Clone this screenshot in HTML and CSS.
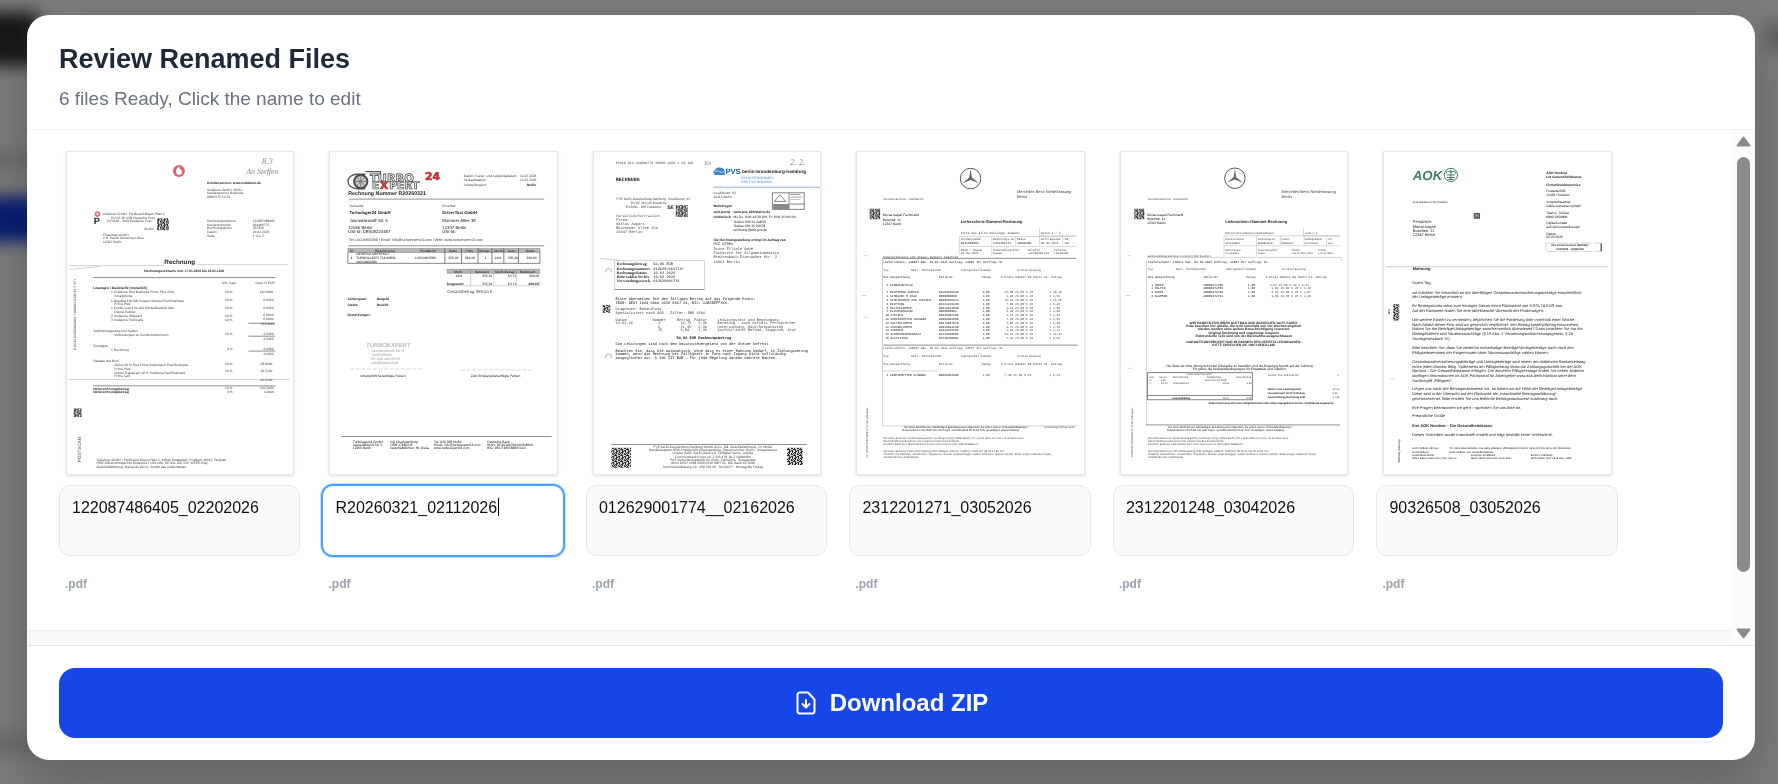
FILE: index.html
```html
<!DOCTYPE html>
<html lang="en">
<head>
	<meta charset="UTF-8">
	<meta name="viewport" content="width=device-width, initial-scale=1">
	<title>Review Renamed Files</title>
	<link rel="stylesheet" href="styles.css">
</head>
<body>
<svg class="defs" width="0" height="0" aria-hidden="true">
	<defs>
		<pattern id="qr" width="18" height="18" patternUnits="userSpaceOnUse">
			<rect width="18" height="18" fill="#ddd"/>
			<path fill="#222" d="M0 0h6v3H3v6H0zM9 0h3v6H9zM15 3h3v3h-3zM6 6h3v6H6zM12 6h3v3h-3zM0 12h3v6H0zM9 9h3v3H9zM15 9h3v6h-6v-3h3zM6 15h6v3H6z"/>
		</pattern>
		<symbol id="star" viewBox="0 0 66 66">
			<circle cx="33" cy="33" r="31" fill="none" stroke="#555" stroke-width="3"/>
			<path fill="#666" d="M33 4l4 26 21 17-25-10L8 47l21-17z"/>
		</symbol>
	</defs>
</svg>

<div class="page-behind" aria-hidden="true">
	<div class="blob logo"></div>
	<div class="blob line"></div>
	<div class="blob cta"></div>
	<div class="blob foot"></div>
	<div class="blob menu"></div>
</div>

<div class="overlay">
<div class="modal" role="dialog" aria-labelledby="title">
	<header class="modal-header">
		<h1 id="title">Review Renamed Files</h1>
		<p>6 files Ready, Click the name to edit</p>
	</header>

	<div class="modal-body">
		<div class="content">
			<div class="files">

				<div class="file">
					<svg class="thumb" viewBox="49 35 684 968" role="img" aria-label="Page preview">
						<circle cx="387" cy="90" r="18" fill="#d96a74"/>
						<path fill="#fff" d="M388 77c-12 4-13 24-1 25 12 0 12-14 3-18z"/>
						<g class="hand">
							<text x="638" y="68" font-size="26">8.3</text>
							<text x="590" y="98" font-size="24">An Steffen</text>
						</g>
						<g class="t10">
							<text class="b" x="472" y="130">Kundenservice: www.vodafone.de</text>
							<text x="472" y="151">Vodafone GmbH, 20111<tspan x="472" dy="10">Kundenservice Business</tspan><tspan x="472" dy="11">0800/172 12 34</tspan></text>
						</g>
						<circle cx="141" cy="220" r="6" fill="none" stroke="#d96a74" stroke-width="5"/>
						<text class="b" x="130" y="251" font-size="28">P</text>
						<g class="t10">
							<text x="156" y="222">Vodafone GmbH, Ferdinand-Braun-Platz 1</text>
							<text x="182" y="234">DV 02 26 0,98 Deutsche Post</text>
							<text x="170" y="244">DVX001 - Welt Deutsche Post</text>
							<text x="282" y="269">0AJ04</text>
							<text x="158" y="287">Finanztaxi GmbH<tspan x="158" dy="10">z.H. Daniel Mommsen Allee</tspan><tspan x="158" dy="10">12347 Berlin</tspan></text>
							<text x="472" y="244">Rechnungsnummer<tspan x="472" dy="11">Kundennummer</tspan><tspan x="472" dy="11">Rechnungskonto</tspan><tspan x="472" dy="11">Datum</tspan><tspan x="472" dy="11">Seite</tspan></text>
							<text x="610" y="244">122087486405<tspan x="610" dy="11">004466773</tspan><tspan x="610" dy="11">333336</tspan><tspan x="610" dy="11">20.02.2026</tspan><tspan x="610" dy="11">1 von 3</tspan></text>
						</g>
						<rect x="321" y="233" width="36" height="36" fill="url(#qr)"/>
						<text class="b" x="343" y="371" font-size="19">Rechnung</text>
						<text class="t10 b" x="282" y="394">Rechnungszeitraum vom 17.01.2026 bis 16.02.2026</text>
						<path class="faint" d="M56 376h285M441 373h277M58 388l90-10M56 720h666"/>
						<path class="rule" d="M128 412h550M128 739h550M597 550h80M597 589h80M597 634h80"/>
						<g class="t10">
							<text x="516" y="430">USt.-Satz</text><text x="618" y="430">Netto in EUR</text>
							<text class="b" x="128" y="447">Lösungen / Basistarife (monatlich)</text>
							<text x="182" y="460">1 Vodafone Red Business Prime Plus ohne<tspan x="192" dy="12">Smartphone</tspan><tspan x="182" dy="13">1 GigaNet 100 GB Zusatz-volumen Red Business</tspan><tspan x="192" dy="11">Prime Plus</tspan><tspan x="182" dy="12">1 Kombi-vorteil für GG Mindestlaufzeit über</tspan><tspan x="192" dy="12">Dienst-Partner</tspan><tspan x="182" dy="11">2 Vodafone Ultracard</tspan><tspan x="182" dy="12">3 Vodafone TwinKarte</tspan></text>
							<text x="526" y="460">19 %<tspan x="526" dy="23">19 %</tspan><tspan x="526" dy="24">19 %</tspan><tspan x="526" dy="24">19 %</tspan><tspan x="526" dy="12">19 %</tspan><tspan x="526" dy="43">19 %</tspan><tspan x="532" dy="46">0 %</tspan><tspan x="526" dy="43">19 %</tspan><tspan x="526" dy="23">19 %</tspan></text>
							<text x="630" y="460">142,0000<tspan x="642" dy="23">0,0000</tspan><tspan x="642" dy="24">0,0000</tspan><tspan x="642" dy="22">0,0000</tspan><tspan x="642" dy="12">0,0000</tspan><tspan x="634" dy="14">142,0000</tspan><tspan x="642" dy="30">4,5000</tspan><tspan x="642" dy="15">4,5000</tspan><tspan x="642" dy="31">4,9900</tspan><tspan x="642" dy="14">4,9900</tspan><tspan x="630" dy="31">-28,0000</tspan><tspan x="630" dy="22">-16,2100</tspan><tspan x="630" dy="26">-44,2100</tspan></text>
							<text x="128" y="577">Verbindungspreise und Karten</text>
							<text x="192" y="587">Verbindungen zu Sonderrufnummern</text>
							<text x="128" y="622">Sonstiges</text>
							<text x="182" y="634">1 Rechnung</text>
							<text x="128" y="667">Rabatte und Boni</text>
							<text x="192" y="678">Aktion 10 % Red Prime Business in Red Business<tspan x="192" dy="12">Prime Plus</tspan><tspan x="192" dy="12">Nutzer Rabatt auf 10 % Vodafone Red Business</tspan><tspan x="192" dy="11">Prime Tarif</tspan></text>
							<text class="b" x="128" y="751">Nettorechnungsbetrag<tspan x="128" dy="11">Nettorechnungsbetrag</tspan></text>
							<text x="526" y="750">19 %<tspan x="532" dy="12">0 %</tspan></text>
							<text x="632" y="750">102,2900<tspan x="644" dy="12">4,9900</tspan></text>
							<text x="138" y="966">Vodafone GmbH | Ferdinand-Braun-Platz 1, 40549 Düsseldorf, Postfach 40012, Register<tspan x="138" dy="10">HRB 24644 Amtsgericht Düsseldorf, USt-IdNr. DE 811 205 332, WEEE-Reg.</tspan><tspan x="138" dy="10">Geschäftsführung: Marcel de Groot, Vorsitz des Aufsichtsrats</tspan></text>
						</g>
						<rect x="69" y="807" width="24" height="26" fill="url(#qr)"/>
						<text transform="translate(92 970) rotate(-90)" font-size="14">POSTSCAN</text>
						<text class="t10" transform="translate(76 630) rotate(-90)">0 04 25 0228 0003003 Y 008201 0220 44 7 VF1</text>
					</svg>
					<textarea aria-label="File name">122087486405_02202026</textarea>
					<span class="ext">.pdf</span>
				</div>

				<div class="file">
					<svg class="thumb" viewBox="43 35 684 968" role="img" aria-label="Page preview">
						<path fill="none" stroke="#555" stroke-width="4" d="M150 100h-24c-40 0-36 44 0 44h24M150 92h45v8"/>
						<circle cx="136" cy="122" r="20" fill="#ccc" stroke="#444" stroke-width="6"/>
						<path stroke="#777" stroke-width="3" d="M122 108l28 28M150 108l-28 28M136 102v40M116 122h40"/>
						<g class="turbo">
							<text x="164" y="124" font-size="34">TURBO</text>
							<text x="170" y="146" font-size="32">E</text>
							<text class="red" x="194" y="146" font-size="32">X</text>
							<text x="222" y="146" font-size="32">PERT</text>
							<text class="red" x="330" y="118" font-size="32">24</text>
						</g>
						<text class="b" x="98" y="162" font-size="16">Rechnung Nummer R20260321</text>
						<g class="t10">
							<text x="447" y="108">Datum / Liefer- und Leistungsdatum<tspan x="447" dy="13">Verkaufsdatum</tspan><tspan x="447" dy="13">Ausstellungsort</tspan></text>
							<text x="617" y="108">11.02.2026<tspan x="617" dy="13">11.02.2026</tspan><tspan class="b" x="637" dy="13">Berlin</tspan></text>
							<text x="102" y="198">Verkäufer</text><text x="382" y="198">Erwerber</text>
							<text x="100" y="303" font-size="11">Tel. 03028800089 | Email: info@turboexpert24.com | Web: www.turboexpert24.com</text>
						</g>
						<g font-size="13">
							<text class="b" x="102" y="221">Turbolager24 GmbH</text><text class="b" x="382" y="221">DriverTaxi GmbH</text>
							<text class="dark" x="102" y="244">Jasnedskiwoff-Str. 5<tspan x="98" dy="20">12055 Berlin</tspan><tspan x="98" dy="13">USt-Id: DE308220487</tspan></text>
							<text class="dark" x="382" y="244">Mommer Allee 38<tspan x="382" dy="20">12347 Berlin</tspan><tspan x="382" dy="13">USt-Id:</tspan></text>
						</g>
						<path class="rule" d="M100 175h590M98 316h592M78 892h634"/>
						<path fill="#b8b8bd" stroke="#444" d="M97 324h580v12H97zM397 387h279v12H397z"/>
						<path fill="none" stroke="#444" stroke-width="2" d="M97 336v33h580v-33M390 324v45M440 324v45M490 324v45M532 324v45M568 324v45M612 324v45"/>
						<path fill="none" stroke="#777" d="M397 422v15h279v-15M468 387v50M538 387v50M606 387v50"/>
						<g class="t10 dark">
							<text x="103" y="334">Nr.</text><text x="180" y="334">Bezeichnung</text><text x="314" y="334">Produkt-Nr.</text><text x="402" y="334">Netto</text><text x="452" y="334">Preis</text><text x="494" y="334">Menge</text><text x="540" y="334">MwSt</text><text x="580" y="334">Netto</text><text x="634" y="334">Brutto</text>
							<text class="b" x="106" y="356">1</text>
							<text x="122" y="345">GENERALÜBERHOLT<tspan x="122" dy="11">TURBOLADER 724-00806</tspan><tspan x="122" dy="11">A6510900280</tspan></text>
							<text x="298" y="356">A 6510903280</text><text x="400" y="356">335,29</text><text x="450" y="356">399,00</text><text x="510" y="356">1</text><text x="540" y="356">19%</text><text x="580" y="356">335,29</text><text x="636" y="356">399,00</text>
							<text x="418" y="397">MwSt</text><text x="480" y="397">Nettowert</text><text x="542" y="397">MwSt-Betrag</text><text x="616" y="397">Bruttowert</text>
							<text x="422" y="409">19%</text><text x="502" y="409">335,29</text><text x="580" y="409">63,71</text><text x="644" y="409">399,00</text>
							<text class="b" x="397" y="433">Insgesamt</text><text x="502" y="433">335,29</text><text x="580" y="433">63,71</text><text class="b" x="642" y="433">399,00</text>
							<text class="b" x="96" y="480">Zahlungsart<tspan x="96" dy="19">Status</tspan><tspan x="96" dy="30">Bemerkungen:</tspan></text>
							<text class="b" x="184" y="480">Bargeld<tspan x="184" dy="19">Bezahlt</tspan></text>
							<text x="134" y="712">Unterschrift berechtigte Person</text><text x="468" y="712">Zum Empfang berechtigte Person</text>
							<text x="112" y="911">Turbolager24 GmbH<tspan x="112" dy="10">Jasnedskiwoff-Str. 5</tspan><tspan x="112" dy="10">12055 Berlin</tspan></text>
							<text x="225" y="911">AG Charlottenburg<tspan x="225" dy="10">HRB 176850 B</tspan><tspan x="225" dy="10">Geschäftsführer: Hr. Duda</tspan></text>
							<text x="357" y="911">Tel. 030 288 00 89<tspan x="357" dy="10">Email: info@turboexpert24.com</tspan><tspan x="357" dy="10">www.turboexpert24.com</tspan></text>
							<text x="518" y="911">Deutsche Bank<tspan x="518" dy="10">IBAN: DE19100700240358000</tspan><tspan x="518" dy="10">BIC: DEUTDEDBBERXXX</tspan></text>
						</g>
						<text x="397" y="459" font-size="13">Gesamtbetrag 399,00 €</text>
						<g class="stamp">
							<text x="152" y="622" font-size="18">TURBOEXPERT</text>
							<text x="168" y="638">Jasnedskiwoff-Str. 5<tspan x="168" dy="12">12055 Berlin</tspan><tspan x="164" dy="12">Tel. 030 288 00 89</tspan><tspan x="168" dy="10">info@turbo24.de</tspan></text>
						</g>
						<path fill="none" stroke="#888" stroke-dasharray="12 5" d="M104 688h216M438 691h220"/>
					</svg>
					<div class="editing">
						<textarea aria-label="File name">R20260321_02112026</textarea>
						<i class="caret"></i>
					</div>
					<span class="ext">.pdf</span>
				</div>

				<div class="file">
					<svg class="thumb" viewBox="41 35 684 968" role="img" aria-label="Page preview">
						<g class="hand"><text x="634" y="72" font-size="26">2. 2.</text><text x="374" y="72" font-size="18">Kn</text></g>
						<path fill="#3c83c8" d="M404 96c-2-20 30-22 32-4v10h-32zM402 90h10v6h-10z"/>
						<path stroke="#fff" stroke-width="2" d="M406 92q8-6 14 0t14 0" fill="none"/>
						<text class="pvs" x="438" y="99" font-size="23">PVS</text>
						<text class="b" x="488" y="95" font-size="14">berlin-brandenburg-hamburg</text>
						<path stroke="#5e8cc0" stroke-width="2" d="M402 139h322"/>
						<text class="blue" x="486" y="113" font-size="10">EIN UNTERNEHMEN<tspan x="486" dy="12">DER PVS HOLDING</tspan></text>
						<text class="mono b" x="107" y="121" font-size="15">RECHNUNG</text>
						<g class="t10">
							<text class="mono" x="107" y="68">PVS10 012 629001774 00000 1000 1 02 160</text>
							<text x="402" y="159">Invalidenstr. 92<tspan x="402" dy="13">10115 Berlin</tspan></text>
							<text x="108" y="177">PVS berlin-brandenburg-hamburg, Invalidenstr. 92</text>
							<text x="152" y="191">DV 02 26 0,95 Deutsche</text>
							<text x="138" y="202">EV2091 - DIE Deutsche</text>
							<text class="b" x="402" y="198">Mahnfragen</text>
							<text class="b" x="402" y="216">web-portal<tspan x="402" dy="17">telefonisch</tspan></text>
							<text class="b" x="462" y="216">www.pvs-bbh/meine.de</text>
							<text class="dark" x="462" y="233">Mo,Do: 8:00-16:30 Uhr, Fr: 8:00-15:00 Uhr<tspan x="462" dy="13">Telefon 030 31 448 55</tspan><tspan x="462" dy="13">Telefax 030 31 92078</tspan><tspan x="462" dy="12">rechnung@bbh-pvs.de</tspan></text>
							<text class="b" x="402" y="301">Die Rechnungsstellung erfolgt im Auftrag von</text>
						</g>
						<text class="b" x="262" y="204" font-size="15">SE</text>
						<rect x="288" y="193" width="36" height="36" fill="url(#qr)"/>
						<path fill="none" stroke="#444" stroke-width="2" d="M580 156h96v50h-96zM630 156v50M586 182l16-20 18 20zM632 190h44"/>
						<path fill="#888" d="M582 190h48v15h-48zM634 160h30v3h-30zM634 168h36v2h-36zM634 176h30v2h-30z"/>
						<g class="mono t11">
							<text class="t10" x="108" y="228">Persönlich/Vertraulich</text>
							<text x="108" y="241">Firma<tspan x="108" dy="12">Niklas Aagari</tspan><tspan x="108" dy="12">Buschower Allee 22a</tspan><tspan x="108" dy="12">12347 Berlin</tspan></text>
							<text x="402" y="315">MVZ DERMA<tspan x="402" dy="14">Ärzte Filiale GmbH</tspan><tspan x="402" dy="12">Fachärzte für Allgemeinmedizin</tspan><tspan x="402" dy="13">Breitenbach-Eisenacher Str. 2</tspan><tspan x="402" dy="13">10961 Berlin</tspan></text>
							<text class="dark" x="220" y="375">50,96 EUR<tspan x="220" dy="13">012629/001774/</tspan><tspan x="220" dy="13">16.02.2026</tspan><tspan x="220" dy="13">19.03.2026</tspan><tspan x="220" dy="12">012629001774</tspan></text>
							<text class="dark" x="106" y="481">Bitte überweisen Sie den fälligen Betrag auf das folgende Konto:<tspan x="106" dy="11">IBAN: DE97 1004 0000 0220 8967 01, BIC: COBADEFFXXX.</tspan></text>
							<text x="106" y="511">Diagnosen: Behandlung<tspan x="106" dy="12">Spezialisiert nach GOÄ - Ziffer: DRK 1996</tspan></text>
							<text x="106" y="543">Datum<tspan x="106" dy="10">11.01.26</tspan></text>
							<text x="218" y="543">Nummer<tspan x="234" dy="10">1</tspan><tspan x="234" dy="11">5</tspan><tspan x="234" dy="10">75</tspan></text>
							<text x="292" y="543">Betrag<tspan x="302" dy="10">10,72</tspan><tspan x="302" dy="11">21,45</tspan><tspan x="302" dy="10">8,04</tspan></text>
							<text x="344" y="543">Faktor<tspan x="356" dy="10">2,30</tspan><tspan x="356" dy="11">2,30</tspan><tspan x="356" dy="10">2,30</tspan></text>
							<text x="414" y="543"> Leistungstext und Begründung<tspan x="414" dy="10">Beratung - auch mittels Fernsprecher</tspan><tspan x="414" dy="11">Untersuchung, Haut/Dermatoskop</tspan><tspan x="414" dy="10">Ausführlicher Befund, Diagnose, Arzt</tspan></text>
							<text class="dark b" x="290" y="598">50,96 EUR Rechnungsbetrag</text>
							<text class="dark" x="106" y="617">Die Leistungen sind nach dem Umsatzsteuergesetz von der Steuer befreit.</text>
							<text class="dark" x="106" y="637">Beachten Sie, dass Sie automatisch, ohne dass es einer Mahnung bedarf, in Zahlungsverzug<tspan x="106" dy="10">kommen, wenn die Rechnung bei Fälligkeit in Form nach Zugang nicht vollständig</tspan><tspan x="106" dy="10">ausgeglichen ist. § 286 III BGB - Für jede Regelung danken mehrere Banken.</tspan></text>
						</g>
						<text class="serif b" x="110" y="375" font-size="12">Rechnungsbetrag<tspan x="110" dy="13">Rechnungsnummer</tspan><tspan x="110" dy="13">Rechnungsdatum</tspan><tspan x="110" dy="13">Bitte zahlen Sie bis</tspan><tspan x="110" dy="12">Verwendungszweck</tspan></text>
						<path class="faint" d="M103 361v87M103 361h272v87M60 354l60 6"/>
						<path class="rule" d="M103 448h272M93 916h590"/>
						<path fill="none" stroke="#888" stroke-width="2" d="M76 396q0-12 9-12t9 12M76 655q0-12 9-12t9 12"/>
						<path fill="url(#qr)" d="M67 495h23v23H67zM93 926h60v60H93zM624 926h48v52h-48z"/>
						<g class="t10" text-anchor="middle">
							<text x="400" y="926">PVS berlin-brandenburg-hamburg GmbH &amp; Co. KG, Geschäftsführung: Dr. Möller<tspan x="400" dy="10">Handelsregister HRB Amtsgericht Charlottenburg, Steuernummer: Berlin, Umsatzsteuer</tspan><tspan x="400" dy="10">Unsere Bank: Berlin-Bank eG, Teilhaber Konto, Leipzig</tspan><tspan x="400" dy="10">Commerzbank Konto-Nr. 2 345 678, BLZ 10040000</tspan><tspan x="400" dy="10">PVS Verrechnungsstelle für Ärzte, Zahnärzte, Therapeuten</tspan><tspan x="400" dy="10">IBAN DE97 1004 0000 0220 8967 01, BIC Bank 10 2098</tspan><tspan x="400" dy="10">Terminvereinbarung 29 · 030 319 00 · Mo bis Fr · Montag bis Freitag</tspan></text>
						</g>
					</svg>
					<textarea aria-label="File name">012629001774__02162026</textarea>
					<span class="ext">.pdf</span>
				</div>

				<div class="file">
					<svg class="thumb pale" viewBox="41 35 684 968" role="img" aria-label="Page preview">
						<use href="#star" x="351" y="80" width="66" height="66"/>
						<text x="524" y="157" font-size="12">Mercedes-Benz Niederlassung<tspan x="524" dy="16">Berlin</tspan></text>
						<text class="t8" x="120" y="179">Mercedes-Benz AG - 10878 Berlin</text>
						<rect x="79" y="204" width="32" height="32" fill="url(#qr)"/>
						<text class="t10 dark" x="119" y="227">Monat Aagari Fachmarkt<tspan x="119" dy="13">Buschstr. 11</tspan><tspan x="119" dy="14">12347 Berlin</tspan></text>
						<text class="b" x="354" y="246" font-size="12">Lieferschein-/Sammel-Rechnung</text>
						<path fill="none" stroke="#888" d="M350 288h350M592 262v24h110M350 288v56M448 288v26M520 288v26M592 288v26M662 288v26M350 318h352M448 318v26"/>
						<path class="rule" d="M118 354h584M120 616h588"/>
						<path class="faint" d="M118 354v506h586M61 346h12M55 466h14M60 532h12M118 694h166"/>
						<g class="t10 mono">
							<text x="354" y="281">Bitte bei allen Zahlungen angeben</text><text x="596" y="279">Seite 1 / 2</text>
							<text x="354" y="299">Kundennummer<tspan class="dark" x="354" dy="12">0141400504</tspan></text><text x="452" y="299">Rechnungs-Nr<tspan class="dark" x="452" dy="12">2312201271</tspan></text><text x="524" y="299">Datum<tspan class="dark" x="524" dy="12">20260305</tspan></text><text x="596" y="299">Auftragsdat<tspan x="596" dy="12">03.03.2026</tspan></text><text x="668" y="299">KZ<tspan x="668" dy="12">Bar</tspan></text>
							<text x="354" y="331">IBAN / Kasse<tspan x="354" dy="10">16.03.2026</tspan></text><text x="452" y="331">Ansprechpartner<tspan x="452" dy="10">Kasse</tspan></text><text x="556" y="331">Telefon<tspan x="556" dy="10">+49303901234</tspan></text><text x="636" y="331">Telefax<tspan x="636" dy="10">+4930390</tspan></text>
							<text x="120" y="353">Bankverbindung und Steuer-Nummern beachten</text>
							<text class="dark" x="120" y="368">Lieferschein: 146807     Dat. 03.03.2026   Auftrag: 44087     Ihr Auftrag: Nr.</text>
							<text x="120" y="391">Typ</text><text x="204" y="391">Amtl. Kennzeichen</text><text x="356" y="391">Fahrgestellnummer</text><text x="526" y="391">Erstzulassung</text>
							<text class="dark" x="120" y="414">Pos Bezeichnung</text><text class="dark" x="288" y="414">Teile-Nr.</text><text x="418" y="414">Menge</text><text x="476" y="414">E-Preis  Rabatt    RG  Netto St.  Betrag</text>
							<text class="dark" x="130" y="437">1 FAHRZEUGTEILE</text>
							<text class="dark" x="130" y="460">2 DICHTRING-KUPFER<tspan x="130" dy="11">3 SCHRAUBE M 8X30</tspan><tspan x="130" dy="12">4 SCHUTZKAPPE FÜR STECKER</tspan><tspan x="130" dy="11">5 DICHTUNG</tspan><tspan x="130" dy="12">6 HALTEKLAMMER</tspan><tspan x="130" dy="11">7 BLECHSCHRAUBE</tspan><tspan x="126" dy="11">10 STUTZEN</tspan><tspan x="126" dy="12">11 SPREIZMUTTER SCHWARZ</tspan><tspan x="126" dy="11">12 HALTEKLAMMER</tspan><tspan x="126" dy="12">13 FEDERKLAMMER</tspan><tspan x="126" dy="11">14 STOPFEN</tspan><tspan x="126" dy="11">15 SCHMUTZFÄNGERSATZ</tspan><tspan x="126" dy="12">16 GLEITSTÜCK</tspan></text>
							<text class="dark" x="288" y="460">A0199978948<tspan x="288" dy="11">N000000000</tspan><tspan x="288" dy="12">A0005459923</tspan><tspan x="288" dy="11">A6421420280</tspan><tspan x="288" dy="12">A0019912098</tspan><tspan x="288" dy="11">N000000001</tspan><tspan x="288" dy="11">A0049902100</tspan><tspan x="288" dy="12">A0009902000</tspan><tspan x="288" dy="11">A0079887878</tspan><tspan x="288" dy="12">A0039943160</tspan><tspan x="288" dy="11">A2019970386</tspan><tspan x="288" dy="11">A6120940006</tspan><tspan x="288" dy="12">A6110780081</tspan></text>
							<text class="dark" x="420" y="460">1,00<tspan x="420" dy="11">1,00</tspan><tspan x="420" dy="12">1,00</tspan><tspan x="420" dy="11">1,00</tspan><tspan x="420" dy="12">1,00</tspan><tspan x="420" dy="11">1,00</tspan><tspan x="420" dy="11">1,00</tspan><tspan x="420" dy="12">1,00</tspan><tspan x="420" dy="11">1,00</tspan><tspan x="420" dy="12">1,00</tspan><tspan x="420" dy="11">1,00</tspan><tspan x="420" dy="11">1,00</tspan><tspan x="420" dy="12">1,00</tspan></text>
							<text x="486" y="460">26,80 25,00 %  20<tspan x="486" dy="11"> 3,40 25,00 %  20</tspan><tspan x="486" dy="12">19,33 25,00 %  20</tspan><tspan x="486" dy="11"> 7,06 25,00 %  20</tspan><tspan x="486" dy="12"> 1,33 25,00 %  20</tspan><tspan x="486" dy="11"> 5,20 25,00 %  20</tspan><tspan x="486" dy="11"> 1,72 25,00 %  20</tspan><tspan x="486" dy="12"> 7,40 25,00 %  20</tspan><tspan x="486" dy="11"> 7,06 25,00 %  20</tspan><tspan x="486" dy="12"> 3,71 25,00 %  20</tspan><tspan x="486" dy="11"> 1,48 25,00 %  20</tspan><tspan x="486" dy="11">43,22 25,00 %  20</tspan><tspan x="486" dy="12"> 7,38 25,00 %  20</tspan></text>
							<text x="622" y="460">1         20,10<tspan x="622" dy="11">1          2,55</tspan><tspan x="622" dy="12">1         14,50</tspan><tspan x="622" dy="11">1          5,30</tspan><tspan x="622" dy="12">1          1,00</tspan><tspan x="622" dy="11">1          3,90</tspan><tspan x="622" dy="11">1          1,29</tspan><tspan x="622" dy="12">1          5,55</tspan><tspan x="622" dy="11">1          5,30</tspan><tspan x="622" dy="12">1          2,78</tspan><tspan x="622" dy="11">1          1,11</tspan><tspan x="622" dy="11">1         32,42</tspan><tspan x="622" dy="12">1          5,54</tspan></text>
							<text x="120" y="629">Lieferschein: 148805     Dat. 04.03.2026   Auftrag: 44077     Ihr Auftrag: Nr.</text>
							<text x="120" y="653">Typ</text><text x="204" y="653">Amtl. Kennzeichen</text><text x="356" y="653">Fahrgestellnummer</text><text x="526" y="653">Erstzulassung</text>
							<text x="120" y="676">Pos Bezeichnung</text><text x="288" y="676">Teile-Nr.</text><text x="418" y="676">Menge</text><text x="476" y="676">E-Preis  Rabatt    RG  Netto St.  Betrag</text>
							<text class="dark" x="130" y="710">1 SPREIZMUTTER SCHWARZ</text><text class="dark" x="288" y="710">A0009902000</text><text x="420" y="710">1,00</text><text x="486" y="710"> 7,38 25,00 %  20</text><text x="622" y="710">1          5,54</text>
						</g>
						<g class="t8">
							<text class="dark" x="184" y="866">Die Ware bleibt bis zur vollständigen Bezahlung unser Eigentum. Es gelten unsere Verkaufsbedingungen.<tspan x="178" dy="9">Reklamationen innerhalb von acht Tagen. Gerichtsstand für beide Teile ist Stuttgart, soweit zulässig.</tspan></text><text x="606" y="866">Fortsetzung nächste Seite</text>
							<text x="120" y="899">Mercedes-Benz AG, Niederlassung Berlin | Seeburger Weg | 13581 Berlin | Tel +49 30 3901-00 | Fax +49 30 3901-0000<tspan x="120" dy="9">info.berlin@mercedes-benz.com | www.mercedes-benz-berlin.de</tspan><tspan x="120" dy="9">Deutsche Bank AG | IBAN DE12 1007 0000 0000 0000 00 | BIC DEUTDEBBXXX</tspan></text>
							<text x="120" y="938">Mercedes-Benz AG | Sitz und Registergericht: Stuttgart, HRB-Nr. 762873 | USt-ID-Nr. DE 32 12 81 763<tspan x="120" dy="9">Vorstand: Ola Källenius, Vorsitzender; Jörg Burzer, Renata Jungo Brüngger, Sabine Kohleisen, Markus Schäfer, Britta Seeger, Hubertus Troska</tspan><tspan x="120" dy="9">Vorsitzender des Aufsichtsrats</tspan></text>
							<text transform="translate(75 956) rotate(-90)">AT 170707   0250 1509 12 17:10 Auftragsnr.</text>
						</g>
					</svg>
					<textarea aria-label="File name">2312201271_03052026</textarea>
					<span class="ext">.pdf</span>
				</div>

				<div class="file">
					<svg class="thumb pale" viewBox="41 35 684 968" role="img" aria-label="Page preview">
						<use href="#star" x="352" y="79" width="66" height="66"/>
						<text x="526" y="157" font-size="12">Mercedes-Benz Niederlassung<tspan x="526" dy="16">Berlin</tspan></text>
						<text class="t8" x="122" y="178">Mercedes-Benz AG - 10878 Berlin</text>
						<rect x="81" y="204" width="31" height="32" fill="url(#qr)"/>
						<text class="t10 dark" x="120" y="227">Monat Aagari Fachmarkt<tspan x="120" dy="12">Buschstr. 11</tspan><tspan x="120" dy="12">12347 Berlin</tspan></text>
						<text class="b" x="356" y="246" font-size="12">Lieferschein-/Sammel-Rechnung</text>
						<path fill="none" stroke="#888" d="M352 286h350M592 262v24h110M352 286v60M450 286v60M522 286v30M594 286v30M662 286v30M352 316h350"/>
						<path class="rule" d="M116 857h586"/>
						<path class="faint" d="M120 351h586v10M118 361v494M60 686h12M60 346h10M55 466h14"/>
						<g class="t8">
							<text x="356" y="279">Bitte bei allen Zahlungen und Rückfragen</text><text x="598" y="279">Seite 1 / 2</text>
							<text x="356" y="299">Kundennummer<tspan class="dark" x="356" dy="12">0141400504</tspan></text><text x="454" y="299">Rechnungs-Nr.<tspan class="dark" x="454" dy="12">2312201248</tspan></text><text x="526" y="299">Datum<tspan class="dark" x="526" dy="12">20260304</tspan></text><text x="596" y="299">Auftragsdatum<tspan x="596" dy="12">03.03.2026</tspan></text><text x="668" y="299">KZ<tspan x="668" dy="12">Bar</tspan></text>
							<text x="356" y="331">IBAN / Kasse<tspan x="356" dy="10">16.03.2026</tspan></text><text x="454" y="331">Ansprechpartner<tspan x="454" dy="10">Kasse</tspan></text><text x="556" y="331">Telefon<tspan x="556" dy="10">+49 30 3901-1234</tspan></text><text x="636" y="331">Telefax<tspan x="636" dy="10">+49 30 3901</tspan></text>
							<text x="122" y="351">Bankverbindung und Steuer-Nummern bitte beachten</text>
						</g>
						<g class="t10 mono">
							<text class="dark" x="122" y="367">Lieferschein: 146811     Dat. 04.03.2026   Auftrag: 44087     Ihr Auftrag: Nr.</text>
							<text x="122" y="390">Typ</text><text x="206" y="390">Amtl. Kennzeichen</text><text x="358" y="390">Fahrgestellnummer</text><text x="528" y="390">Erstzulassung</text>
							<text class="dark" x="122" y="414">Pos Bezeichnung</text><text class="dark" x="290" y="414">Teile-Nr.</text><text x="420" y="414">Menge</text><text x="478" y="414">E-Preis  Rabatt    RG  Netto St.  Betrag</text>
							<text class="dark" x="132" y="436">1 HAKEN<tspan x="132" dy="12">2 HALTER</tspan><tspan x="132" dy="11">3 KAPPE</tspan><tspan x="132" dy="12">4 KLAMMER</tspan></text>
							<text class="dark" x="290" y="436">A0009972788<tspan x="290" dy="12">A0009972789</tspan><tspan x="290" dy="11">A0009972790</tspan><tspan x="290" dy="12">A0009972791</tspan></text>
							<text class="dark" x="424" y="436">1,00<tspan x="424" dy="12">1,00</tspan><tspan x="424" dy="11">2,00</tspan><tspan x="424" dy="12">2,00</tspan></text>
							<text x="490" y="436"> 4,84 25,00 %  20       1         3,63<tspan x="490" dy="12"> 3,04 25,00 %  20       1         2,28</tspan><tspan x="490" dy="11"> 5,16 25,00 %  20       1         3,87</tspan><tspan x="490" dy="12"> 3,04 25,00 %  20       1         2,28</tspan></text>
						</g>
						<text class="t10 b" x="412" y="551" text-anchor="middle">WIR DANKEN FÜR IHREN AUFTRAG UND WÜNSCHEN GUTE FAHRT.<tspan x="412" dy="10">Bitte beachten Sie: Altteile, die nicht innerhalb von vier Wochen abgeholt</tspan><tspan x="412" dy="10">werden, werden ohne weitere Benachrichtigung verwertet.</tspan><tspan x="412" dy="10">Original-Rechnung und zugehörige Coupons</tspan><tspan x="412" dy="10">Elektronische Teile sind von der Rücknahme ausgeschlossen</tspan><tspan x="412" dy="19">GARANTIEANSPRÜCHE NUR IM RAHMEN DER HERSTELLERANGABEN.</tspan><tspan x="412" dy="10">BITTE SPRECHEN SIE UNS HIERZU AN!</tspan></text>
						<text class="t10 dark" x="400" y="681" text-anchor="middle">Die Ware ist ohne Abzug sofort bei Übergabe zu bezahlen und die Regelung beruht auf der Zahlung.<tspan x="400" dy="9">Es gelten die Verkaufsbedingungen für Ersatzteile und Zubehör.</tspan></text>
						<path fill="none" stroke="#444" stroke-width="2" d="M121 699h317v82H121zM121 768h317"/>
						<g class="t8">
							<text x="240" y="707">Steuersatz-Übersicht</text>
							<text x="126" y="715">USt.<tspan x="126" dy="9">%</tspan><tspan x="126" dy="9">1</tspan></text><text x="156" y="715">Steuer-<tspan x="162" dy="9">satz</tspan><tspan x="162" dy="9">19,00</tspan></text><text x="198" y="715">Bezeichnung<tspan x="198" dy="18">Umsatzsteuer</tspan></text><text x="300" y="715">Nettobetrag<tspan x="294" dy="9">Warenwert in EUR</tspan><tspan x="348" dy="9">12,06</tspan></text><text x="388" y="715">Steuerbetrag<tspan x="420" dy="18">2,29</tspan></text>
							<text class="b" x="196" y="778">Gesamtbetrag</text><text x="348" y="778">12,06</text><text x="420" y="778">2,29</text>
							<text x="484" y="710">Summe Teile und Zubehör</text><text x="694" y="710">1</text>
							<text class="b" x="484" y="751">Waren- und Leistungswert<tspan x="484" dy="12">Umsatzsteuer 19,00 % Betrag</tspan><tspan x="484" dy="13">Gesamtbetrag Rechnung EUR</tspan></text><text x="680" y="751">12,06<tspan x="680" dy="12">2,29</tspan><tspan x="680" dy="13">14,35</tspan></text>
							<text class="b" x="306" y="794">Diese Rechnung wird zum Fälligkeitstermin dem oben angegebenen Konto / Kreditkarte abgebucht.</text>
							<text class="dark" x="184" y="865">Die Ware bleibt bis zur vollständigen Bezahlung unser Eigentum. Es gelten unsere Verkaufsbedingungen.<tspan x="180" dy="9">Reklamationen innerhalb von acht Tagen. Gerichtsstand für beide Teile ist Stuttgart, soweit zulässig.</tspan></text>
							<text x="122" y="899">Mercedes-Benz AG, Niederlassung Berlin | Seeburger Weg | 13581 Berlin | Tel +49 30 3901-00 | Fax +49 30 3901-0000<tspan x="122" dy="9">info.berlin@mercedes-benz.com | www.mercedes-benz-berlin.de</tspan><tspan x="122" dy="9">Deutsche Bank AG | IBAN DE12 1007 0000 0000 0000 00 | BIC DEUTDEBBXXX</tspan></text>
							<text x="122" y="938">Mercedes-Benz AG | Sitz und Registergericht: Stuttgart, HRB-Nr. 762873 | USt-ID-Nr. DE 32 12 81 763<tspan x="122" dy="9">Vorstand: Ola Källenius, Vorsitzender; Jörg Burzer, Renata Jungo Brüngger, Sabine Kohleisen, Markus Schäfer, Britta Seeger, Hubertus Troska</tspan><tspan x="122" dy="9">Vorsitzender des Aufsichtsrats</tspan></text>
							<text transform="translate(78 954) rotate(-90)">07102702   0250 0304 12 17:10 Auftragsnr.</text>
						</g>
					</svg>
					<textarea aria-label="File name">2312201248_03042026</textarea>
					<span class="ext">.pdf</span>
				</div>

				<div class="file">
					<svg class="thumb" viewBox="41 35 684 968" role="img" aria-label="Page preview">
						<text class="aok" x="128" y="118" font-size="40">AOK</text>
						<g fill="none" stroke="#3b7a62" stroke-width="3">
							<circle cx="243" cy="102" r="20"/>
							<path d="M243 86v30M231 102h24M243 94q-14-8-14 4M243 94q14-8 14 4M231 110h24M235 116h16"/>
						</g>
						<g class="t10 dark">
							<text class="b" x="531" y="98">AOK Nordost<tspan x="531" dy="13">Die Gesundheitskasse</tspan><tspan x="531" dy="24">Firmenkundenservice</tspan></text>
							<text x="531" y="155">Postanschrift<tspan x="531" dy="11">14456 Potsdam</tspan><tspan x="531" dy="22">Ansprechpartner</tspan><tspan x="531" dy="11">Claire-Vanessa Lipinski</tspan><tspan x="531" dy="22">Telefon, Telefax</tspan><tspan x="531" dy="11">0800 2650800</tspan><tspan x="531" dy="19">Digital kontakt</tspan><tspan x="531" dy="11">aok.de/nordost/kontakt</tspan><tspan x="531" dy="20">Datum</tspan><tspan x="531" dy="11">05.03.2026</tspan></text>
							<text class="t8" x="128" y="188">AOK Nordost 14456 Potsdam</text>
							<text class="t8 b" x="546" y="318">Ihre Firmennummer (Betrieb):</text><text class="t8 b" x="562" y="328">90326508 - VERBUND</text>
						</g>
						<path fill="#555" d="M312 217h19v17h-19z"/><path stroke="#ddd" stroke-width="2" d="M315 221l13 8M328 221l-13 8"/>
						<path fill="none" stroke="#777" stroke-dasharray="30 6" d="M530 308h166v25H530z"/><path stroke="#222" stroke-width="3" d="M697 309v24"/>
						<path class="faint" d="M46 379h674M60 718h12"/>
						<rect x="69" y="492" width="18" height="50" fill="url(#qr)"/>
						<g class="letter">
							<text x="128" y="248">Persönlich<tspan x="128" dy="13">Manal Aagari</tspan><tspan x="128" dy="13">Buschstr. 11</tspan><tspan x="128" dy="13">12347 Berlin</tspan></text>
							<text class="b" x="128" y="389">Mahnung</text>
							<text x="126" y="432">Guten Tag,</text>
							<text x="126" y="461">wir möchten Sie freundlich an die überfälligen Gesamtsozialversicherungsbeiträge einschließlich<tspan x="126" dy="14">der Umlagebeträge erinnern.</tspan></text>
							<text x="126" y="501">Ihr Beitragskonto weist zum heutigen Datum einen Rückstand von 8.975,74 EUR aus.<tspan x="126" dy="15">Auf der Rückseite finden Sie eine tabellarische Übersicht der Forderungen.</tspan></text>
							<text x="126" y="543">Um weitere Kosten zu vermeiden, begleichen Sie die Forderung bitte innerhalb einer Woche.<tspan x="126" dy="14">Nach Ablauf dieser Frist sind wir gesetzlich verpflichtet, den Betrag kostenpflichtig einzuziehen.</tspan><tspan x="126" dy="14">Haben Sie die Beiträge/Umlagebeträge zwischenzeitlich überwiesen? Dann beachten Sie nur die</tspan><tspan x="126" dy="15">Mahngebühren und Säumniszuschläge (§ 19 Abs. 2 Verwaltungsvollstreckungsgesetz, § 24</tspan><tspan x="126" dy="14">Sozialgesetzbuch IV).</tspan></text>
							<text x="126" y="628">Bitte beachten Sie, dass Sie weiterhin rückständige Beiträge/Umlagebeträge auch nach den<tspan x="126" dy="14">Fälligkeitsterminen der Folgemonate ohne Säumniszuschläge zahlen können.</tspan></text>
							<text x="126" y="669">Gesamtsozialversicherungsbeiträge und Umlagebeträge sind immer am drittletzten Bankarbeitstag<tspan x="126" dy="15">eines jeden Monats fällig. Spätestens am Fälligkeitstag muss die Zahlungsgutschrift bei der AOK</tspan><tspan x="126" dy="14">Nordost – Die Gesundheitskasse erfolgen. Die aktuellen Fälligkeitstage finden Sie neben anderen</tspan><tspan x="126" dy="15">wichtigen Informationen im AOK Fachportal für Arbeitgeber www.aok.de/fk/nordost unter dem</tspan><tspan x="126" dy="14">Suchbegriff „Fälligkeit“.</tspan></text>
							<text x="126" y="752">Liegen uns noch alle Beitragsnachweise vor, so haben wir die Höhe der Beiträge/Umlagebeträge<tspan x="126" dy="15">Diese sind in der Übersicht auf der Rückseite als „maschinelle Beitragsschätzung“</tspan><tspan x="126" dy="14">gekennzeichnet. Bitte reichen Sie uns fehlende Beitragsnachweise kurzfristig nach.</tspan></text>
							<text x="126" y="808">Ihre Fragen beantworten wir gern – sprechen Sie uns bitte an.</text>
							<text x="126" y="834">Freundliche Grüße</text>
							<text class="b" x="126" y="863">Ihre AOK Nordost – Die Gesundheitskasse</text>
							<text x="126" y="889">Dieses Schreiben wurde maschinell erstellt und trägt deshalb keine Unterschrift.</text>
						</g>
						<g class="t8 dark">
							<text x="126" y="929">AOK Nordost, Adresse<tspan x="126" dy="12">Gerichtsstand</tspan><tspan x="126" dy="10">Landesbank Berlin</tspan><tspan x="126" dy="10">IBAN: DE03 1005 0000 0719 4110 00</tspan></text>
							<text x="238" y="929">Tel. 0331 0800 2650800, Fax 0800 2650900, Öffnungszeiten Mo-Fr 08:00 Uhr bis 18:00 Uhr (kostenlos)<tspan x="238" dy="12">AOK Nordost - Die Gesundheitskasse</tspan></text>
							<text x="303" y="951">Deutsche Kreditbank<tspan x="303" dy="10">IBAN: DE69 1203 0000 0000 2214</tspan></text><text x="484" y="951">Berliner Volksbank<tspan x="484" dy="10">IBAN: DE90 1007 0848 0214 4859</tspan></text>
							<text transform="translate(90 970) rotate(-90)">9032650_Mahnung</text>
							<text transform="translate(60 524) rotate(-90)">4851</text>
						</g>
					</svg>
					<textarea aria-label="File name">90326508_03052026</textarea>
					<span class="ext">.pdf</span>
				</div>

			</div>
			<div class="next-section"></div>
		</div>

		<div class="scrollbar" aria-hidden="true">
			<svg width="15" height="11" viewBox="0 0 15 11"><path d="M7.500 1.500L13.500 9.500H1.500z"/></svg>
			<div class="track"><div class="handle"></div></div>
			<svg width="15" height="11" viewBox="0 0 15 11"><path d="M7.500 9.500L13.500 1.500H1.500z"/></svg>
		</div>
	</div>

	<footer class="modal-footer">
		<button type="button" class="download">
			<svg width="24" height="24" viewBox="0 0 24 24" fill="none" stroke="currentColor" stroke-width="2" stroke-linecap="round" stroke-linejoin="round" aria-hidden="true">
				<path d="M12 9v7M8.500 13l3.500 3.500 3.500-3.500"/>
				<path d="M18 22.500H6a2.500 2.500 0 0 1-2.500-2.500V3.500A2.500 2.500 0 0 1 6 1.500h7.500a1 1 0 0 1 .8.300l5.800 6.200a1 1 0 0 1 .4.800V20a2.500 2.500 0 0 1-2.500 2.500z"/>
			</svg>
			Download ZIP
		</button>
	</footer>
</div>
</div>
</body>
</html>
```

FILE: styles.css
```css
* {
	box-sizing: border-box;
}
body {
	margin: 0;
	background: #7a7c7a;
	font-family: "Liberation Sans", Arial, sans-serif;
	color: #1f2937;
}
.defs {
	position: absolute;
}

/* Blurred page behind the dialog */
.page-behind {
	position: fixed;
	inset: 0;
	overflow: hidden;
}
.blob {
	position: absolute;
	filter: blur(8px);
}
.logo {
	left: -20px;
	top: 12px;
	width: 58px;
	height: 54px;
	background: #181818;
}
.line {
	left: -20px;
	top: 154px;
	width: 60px;
	height: 12px;
	background: #636463;
}
.cta {
	left: -20px;
	top: 196px;
	width: 70px;
	height: 46px;
	background: #0b1f72;
}
.foot {
	left: -20px;
	bottom: 32px;
	width: 60px;
	height: 16px;
	background: #656665;
}
.menu {
	right: -10px;
	top: 24px;
	width: 22px;
	height: 26px;
	background: #5a5b5f;
}

/* Dialog */
.overlay {
	position: relative;
	display: flex;
	min-height: 100vh;
	padding: 15px 23px 24px 27px;
}
.modal {
	display: flex;
	flex-direction: column;
	flex: 1;
	min-width: 0;
	background: #fff;
	border-radius: 22px;
	overflow: hidden;
	box-shadow: 0 24px 50px rgba(0, 0, 0, .2);
}
.modal-header {
	padding: 24px 32px 16px;
	border-bottom: 1px solid #f3f4f6;
}
h1 {
	margin: 0;
	font-size: 27px;
	line-height: 40px;
}
.modal-header p {
	margin: 6px 0 0;
	font-size: 19px;
	line-height: 28px;
	color: #6b7280;
}
.modal-body {
	display: flex;
	flex: 1;
}
.content {
	display: flex;
	flex-direction: column;
	flex: 1;
	min-width: 0;
}
.files {
	display: grid;
	grid-template-columns: repeat(6, 1fr);
	gap: 22px;
	width: calc((100% - 64px) * .95);
	margin-left: 32px;
	padding: 21px 0 38px;
}
.file {
	display: flex;
	flex-direction: column;
	min-width: 0;
}
.next-section {
	flex: 1;
	min-height: 14px;
	background: #f9fafb;
	border-top: 1px solid #f0f1f3;
}

/* Page previews */
.thumb {
	display: block;
	width: auto;
	height: 324px;
	margin: 0 6px 10px 7px;
	background: #fff;
	border: 1px solid #e5e7eb;
	box-shadow: 0 1px 3px rgba(0, 0, 0, .15);
	fill: #444;
	white-space: pre;
	text-rendering: geometricPrecision;
}
.t8 {
	font-size: 8px;
}
.t10 {
	font-size: 10px;
}
.t11 {
	font-size: 11px;
}
.letter {
	font-size: 12px;
	fill: #222;
}
.b {
	font-weight: bold;
	fill: #222;
}
.dark {
	fill: #111;
}
.mono {
	font-family: "Liberation Mono", monospace;
}
.mono.t10 {
	font-size: 9px;
}
.serif {
	font-family: "Liberation Serif", serif;
}
.hand {
	font-style: italic;
	font-family: "Liberation Serif", serif;
	fill: #888;
}
.pale {
	fill: #444;
}
.rule {
	fill: none;
	stroke: #555;
	stroke-width: 2;
}
.faint {
	fill: none;
	stroke: #bbb;
	stroke-width: 2;
}
.turbo {
	font-weight: bold;
	font-family: "DejaVu Sans", sans-serif;
	fill: #eee;
	stroke: #333;
	stroke-width: 2;
}
.turbo .red {
	fill: #e0303c;
	stroke: #a33;
}
.stamp {
	font-style: italic;
	font-size: 11px;
	fill: #999;
}
.pvs {
	font-weight: bold;
	fill: #1c5fa8;
}
.blue {
	fill: #4a86c5;
}
.aok {
	font-weight: bold;
	font-style: italic;
	fill: #3b7a62;
}

/* File names */
textarea {
	display: block;
	width: 100%;
	height: 71px;
	margin: 0;
	padding: 11px 12px;
	border: 1px solid #e5e7eb;
	border-radius: 11px;
	background: #f9fafb;
	font: 16px/22px "Liberation Sans", Arial, sans-serif;
	color: #111;
	resize: none;
	overflow: hidden;
	outline: none;
}
.editing {
	position: relative;
}
.editing textarea {
	background: #fff;
	border-color: #4d9fff;
	box-shadow: 0 0 0 1px #4d9fff, 0 0 0 2px #c5e0ff;
}
.caret {
	position: absolute;
	left: 176px;
	top: 13px;
	width: 1px;
	height: 18px;
	background: #000;
}
.ext {
	margin-top: 20px;
	padding-left: 6px;
	font-size: 12px;
	line-height: 16px;
	font-weight: bold;
	color: #9ca3af;
}

/* Scrollbar */
.scrollbar {
	display: flex;
	flex-direction: column;
	align-items: center;
	gap: 10px;
	width: 23px;
	padding: 6px 0;
	background: #fcfcfc;
}
.scrollbar svg {
	fill: #8b8b8b;
	stroke: #8b8b8b;
	stroke-width: 2;
	stroke-linejoin: round;
}
.track {
	flex: 1;
}
.handle {
	width: 13px;
	height: 90%;
	border-radius: 7px;
	background: #8b8b8b;
}

.modal-footer {
	padding: 22px 32px;
	border-top: 1px solid #e5e7eb;
}
.download {
	display: flex;
	align-items: center;
	justify-content: center;
	gap: 12px;
	width: 100%;
	height: 70px;
	border: 0;
	border-radius: 16px;
	background: #1447e6;
	color: #fff;
	font: bold 24px/32px "Liberation Sans", Arial, sans-serif;
	cursor: pointer;
}
```
